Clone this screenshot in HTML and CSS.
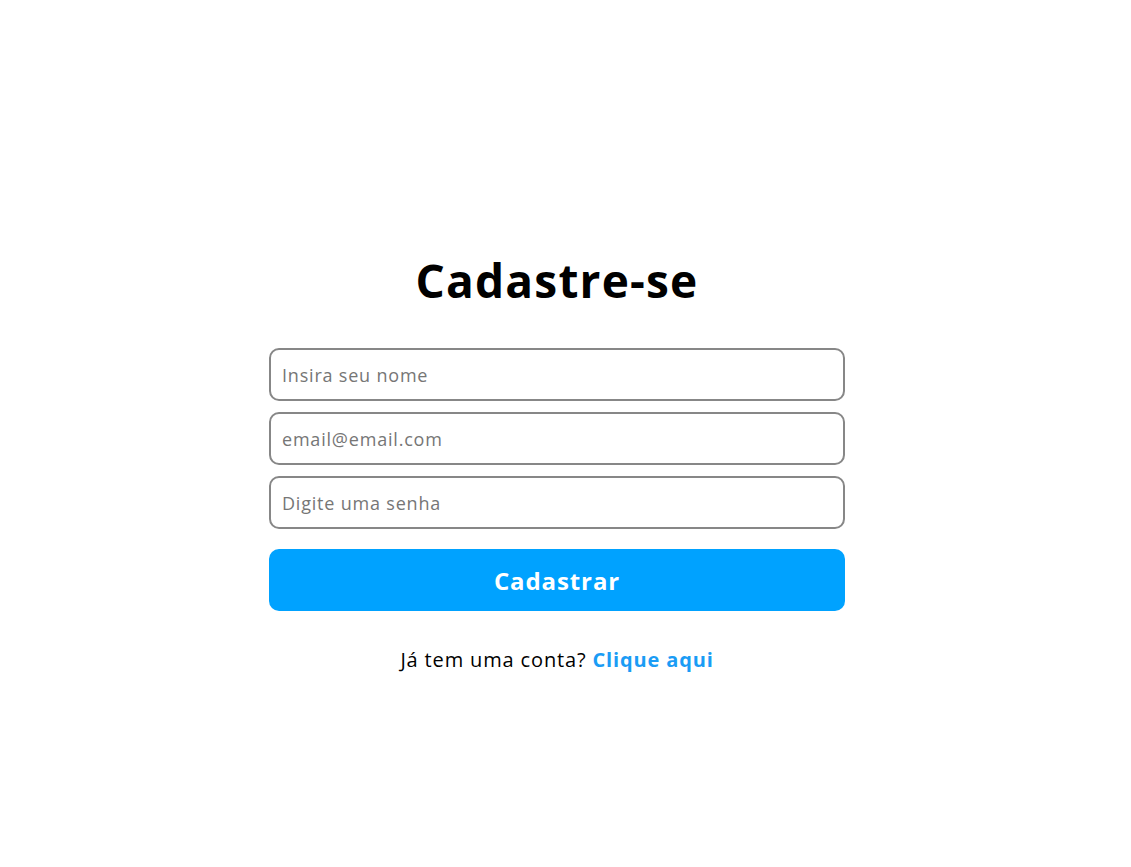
FILE: index.html
```html
<!DOCTYPE html>
<html lang="pt-BR">
<head>
<meta charset="utf-8">
<title>Cadastre-se</title>
<link rel="stylesheet" href="styles.css">
</head>
<body>
<main class="page">
  <form class="form">
    <h1 class="title">Cadastre-se</h1>
    <div class="fields">
      <input class="field" type="text" placeholder="Insira seu nome">
      <input class="field" type="email" placeholder="email@email.com">
      <input class="field" type="password" placeholder="Digite uma senha">
    </div>
    <button class="submit" type="button">Cadastrar</button>
    <p class="note">Já tem uma conta? <a class="link" href="#">Clique aqui</a></p>
  </form>
</main>
</body>
</html>
```

FILE: styles.css
```css
* { box-sizing: border-box; }
html, body { margin: 0; background: #fff; }
body {
  font-family: "Open Sans", "DejaVu Sans", sans-serif;
  color: #000;
}
.page {
  display: flex;
  justify-content: center;
  padding-top: 254px;
  padding-right: 17px;
}
.form {
  width: 576px;
  display: flex;
  flex-direction: column;
  align-items: stretch;
}
.title {
  margin: 0 0 41px;
  font-size: 46px;
  line-height: 53px;
  font-weight: 700;
  text-align: center;
  letter-spacing: 1.2px;
}
.fields {
  display: flex;
  flex-direction: column;
  gap: 11px;
}
.field {
  height: 53px;
  border: 2px solid #878787;
  border-radius: 10px;
  padding: 0 11px;
  font-family: inherit;
  font-size: 18px;
  letter-spacing: 0.8px;
  color: #222;
  outline: none;
}
.field::placeholder { color: #767676; }
.submit {
  margin-top: 20px;
  height: 62px;
  border: 0;
  border-radius: 10px;
  background: #00a2ff;
  color: #fff;
  font-family: inherit;
  font-size: 24px;
  letter-spacing: 0.9px;
  font-weight: 700;
  cursor: pointer;
}
.note {
  margin: 35px 0 0;
  text-align: center;
  font-size: 20px;
  letter-spacing: 0.85px;
  line-height: 27px;
}
.link {
  color: #1a9cf5;
  font-weight: 700;
  text-decoration: none;
}
```
